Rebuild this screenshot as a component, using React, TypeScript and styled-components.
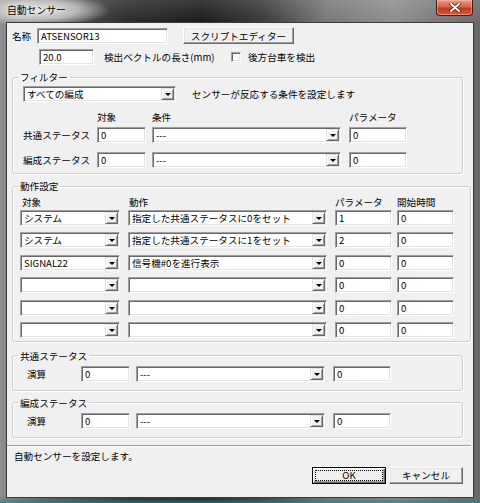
import styled, { createGlobalStyle } from "styled-components";

const GlobalStyle = createGlobalStyle`
  html, body {
    margin: 0;
    padding: 0;
    background: #000;
  }
  body {
    width: 480px;
    height: 503px;
    overflow: hidden;
    font-family: "Noto Sans CJK JP", "Noto Sans", sans-serif;
    font-size: 9.6px;
    color: #000;
  }
`;

type ActionRow = {
  target: string;
  action: string;
  param: string;
  start: string;
};

const actions: ActionRow[] = [
  { target: "システム", action: "指定した共通ステータスに0をセット", param: "1", start: "0" },
  { target: "システム", action: "指定した共通ステータスに1をセット", param: "2", start: "0" },
  { target: "SIGNAL22", action: "信号機#0を進行表示", param: "0", start: "0" },
  { target: "", action: "", param: "0", start: "0" },
  { target: "", action: "", param: "0", start: "0" },
  { target: "", action: "", param: "0", start: "0" },
];

const Combo = ({ w, value }: { w: number; value?: string }) => (
  <ComboField $w={w}>
    <ComboText>{value}</ComboText>
    <ComboArrow />
  </ComboField>
);

const CloseIcon = () => (
  <svg width="12" height="9" viewBox="0 0 12 9">
    <path d="M2 1 L10 8 M10 1 L2 8" stroke="#5a1408" strokeWidth="3.4" strokeLinecap="round" />
    <path d="M2 1 L10 8 M10 1 L2 8" stroke="#ffffff" strokeWidth="2" strokeLinecap="round" />
  </svg>
);

export default function App() {
  return (
    <>
      <GlobalStyle />
      <Window>
        <TitleBar>
          <TitleText>自動センサー</TitleText>
          <CloseButton>
            <CloseIcon />
          </CloseButton>
        </TitleBar>
        <Client>
          <TopRow>
            <Label $w={25}>名称</Label>
            <TextBox $w={131}>ATSENSOR13</TextBox>
            <PushButton $w={111} $ml={15}>
              スクリプトエディター
            </PushButton>
          </TopRow>
          <OptionRow>
            <TextBox $w={55}>20.0</TextBox>
            <Label $w={127} $ml={10}>
              検出ベクトルの長さ(mm)
            </Label>
            <CheckBox />
            <Label $ml={7}>後方台車を検出</Label>
          </OptionRow>

          <Group $w={451} $mt={6} $pt={3} $pb={5}>
            <Caption>フィルター</Caption>
            <GroupBody $pl={5}>
              <FilterLine>
                <Combo w={153} value="すべての編成" />
                <Label $ml={16}>センサーが反応する条件を設定します</Label>
              </FilterLine>
              <FieldGrid $cols="74px 55px 197px 58px" $rows="16px 25px 16px" $mt={9}>
                <span />
                <Head>対象</Head>
                <Head>条件</Head>
                <Head>パラメータ</Head>
                <Label>共通ステータス</Label>
                <TextBox $w={49}>0</TextBox>
                <Combo w={189} value="---" />
                <TextBox $w={58}>0</TextBox>
                <Label>編成ステータス</Label>
                <TextBox $w={49}>0</TextBox>
                <Combo w={189} value="---" />
                <TextBox $w={58}>0</TextBox>
              </FieldGrid>
            </GroupBody>
          </Group>

          <Group $w={459} $mt={6} $pt={4} $pb={3}>
            <Caption>動作設定</Caption>
            <GroupBody $pl={2}>
              <FieldGrid
                $cols="108px 207px 62px 62px"
                $rows="14px repeat(5, 22.4px) 16px"
              >
                <Head $pl={2}>対象</Head>
                <Head $pl={1}>動作</Head>
                <Head>パラメータ</Head>
                <Head>開始時間</Head>
                {actions.map((row, i) => (
                  <RowCells key={i}>
                    <Combo w={100} value={row.target} />
                    <Combo w={199} value={row.action} />
                    <TextBox $w={57}>{row.param}</TextBox>
                    <TextBox $w={57}>{row.start}</TextBox>
                  </RowCells>
                ))}
              </FieldGrid>
            </GroupBody>
          </Group>

          <Group $w={451} $mt={8} $pt={4} $pb={8}>
            <Caption>共通ステータス</Caption>
            <GroupBody $pl={9}>
              <FieldGrid $cols="54px 55px 197px 58px" $rows="16px">
                <Label>演算</Label>
                <TextBox $w={49}>0</TextBox>
                <Combo w={189} value="---" />
                <TextBox $w={58}>0</TextBox>
              </FieldGrid>
            </GroupBody>
          </Group>

          <Group $w={451} $mt={6} $pt={4} $pb={8}>
            <Caption>編成ステータス</Caption>
            <GroupBody $pl={9}>
              <FieldGrid $cols="54px 55px 197px 58px" $rows="16px">
                <Label>演算</Label>
                <TextBox $w={49}>0</TextBox>
                <Combo w={189} value="---" />
                <TextBox $w={58}>0</TextBox>
              </FieldGrid>
            </GroupBody>
          </Group>

          <Separator />
          <StatusText>自動センサーを設定します。</StatusText>
          <ButtonBar>
            <DefaultButton $w={74}>OK</DefaultButton>
            <PushButton $w={74}>キャンセル</PushButton>
          </ButtonBar>
        </Client>
      </Window>
    </>
  );
}

const Window = styled.div`
  box-sizing: border-box;
  width: 480px;
  height: 503px;
  display: flex;
  flex-direction: column;
  padding: 0 7px 6px;
  background:
    radial-gradient(ellipse 72px 17px at 38px 10px, rgba(236, 236, 236, 0.95) 0%, rgba(205, 205, 205, 0.8) 55%, rgba(190, 190, 190, 0) 100%),
    linear-gradient(180deg, rgba(255, 255, 255, 0.14) 0px, rgba(255, 255, 255, 0) 24px, rgba(0, 0, 0, 0) 496px, rgba(40, 130, 140, 0.7) 503px),
    linear-gradient(90deg, #8e8e8e 0%, #5e5e5e 10%, #2a2a2a 26%, #1a1a1a 42%, #353535 54%, #767676 68%, #8c8c8c 82%, #686868 100%);
`;

const TitleBar = styled.div`
  height: 23px;
  display: flex;
  justify-content: space-between;
  align-items: flex-start;
`;

const TitleText = styled.span`
  padding-top: 4px;
  font-size: 9.8px;
  line-height: 13px;
  color: #000;
  text-shadow: 0 0 4px #fff, 0 0 8px #eee;
`;

const CloseButton = styled.div`
  box-sizing: border-box;
  width: 37px;
  height: 16px;
  display: flex;
  align-items: center;
  justify-content: center;
  border: 1px solid #4a1a12;
  border-top: none;
  border-radius: 0 0 4px 4px;
  background: linear-gradient(180deg, #e89a88 0%, #d6634c 45%, #c23a1e 55%, #d8573a 100%);
  box-shadow: inset 0 0 0 1px rgba(255, 200, 180, 0.5);
`;

const Client = styled.div`
  flex: 1;
  display: flex;
  flex-direction: column;
  background: #f0f0f0;
  box-shadow: 0 0 0 1px #3a3a3a;
`;

const TopRow = styled.div`
  display: flex;
  align-items: center;
  height: 17px;
  margin-top: 4px;
  padding-left: 5px;
`;

const OptionRow = styled.div`
  display: flex;
  align-items: center;
  height: 16px;
  margin-top: 5px;
  padding-left: 32px;
`;

const Label = styled.span<{ $w?: number; $ml?: number }>`
  ${(p) => (p.$w ? `width: ${p.$w}px;` : "")}
  margin-left: ${(p) => p.$ml ?? 0}px;
  flex-shrink: 0;
  white-space: nowrap;
  line-height: 16px;
`;

const Head = styled.span<{ $pl?: number }>`
  padding-left: ${(p) => p.$pl ?? 0}px;
  line-height: 12px;
  white-space: nowrap;
`;

const sunken = `
  border: 1px solid;
  border-color: #a0a0a0 #ffffff #ffffff #a0a0a0;
  box-shadow: inset 1px 1px 0 #696969, inset -1px -1px 0 #e3e3e3;
`;

const TextBox = styled.div<{ $w: number }>`
  box-sizing: border-box;
  width: ${(p) => p.$w}px;
  height: 16px;
  padding: 0 2px 0 3px;
  background: #fff;
  ${sunken}
  line-height: 14px;
  white-space: nowrap;
  overflow: hidden;
  flex-shrink: 0;
`;

const ComboField = styled.div<{ $w: number }>`
  box-sizing: border-box;
  width: ${(p) => p.$w}px;
  height: 16px;
  padding: 1px;
  display: flex;
  background: #fff;
  ${sunken}
  flex-shrink: 0;
`;

const ComboText = styled.span`
  flex: 1;
  padding-left: 2px;
  line-height: 12px;
  white-space: nowrap;
  overflow: hidden;
`;

const ComboArrow = styled.span`
  box-sizing: border-box;
  width: 13px;
  display: flex;
  align-items: center;
  justify-content: center;
  background: #f0f0f0;
  border: 1px solid;
  border-color: #e3e3e3 #696969 #696969 #e3e3e3;
  box-shadow: inset 1px 1px 0 #fff, inset -1px -1px 0 #a0a0a0;

  &::after {
    content: "";
    margin-top: 1px;
    border-style: solid;
    border-width: 3px 3px 0;
    border-color: #000 transparent transparent;
  }
`;

const PushButton = styled.div<{ $w: number; $ml?: number }>`
  box-sizing: border-box;
  width: ${(p) => p.$w}px;
  height: 17px;
  margin-left: ${(p) => p.$ml ?? 0}px;
  display: flex;
  align-items: center;
  justify-content: center;
  background: #f0f0f0;
  border: 1px solid;
  border-color: #ffffff #696969 #696969 #ffffff;
  box-shadow: inset -1px -1px 0 #a0a0a0, inset 1px 1px 0 #e3e3e3;
  white-space: nowrap;
  flex-shrink: 0;
`;

const DefaultButton = styled(PushButton)`
  border-color: #000;
  box-shadow: inset 1px 1px 0 #fff, inset -1px -1px 0 #696969, inset -2px -2px 0 #a0a0a0;
  outline: 1px dotted #000;
  outline-offset: -4px;
`;

const CheckBox = styled.span`
  box-sizing: border-box;
  width: 10px;
  height: 10px;
  background: #fff;
  ${sunken}
  flex-shrink: 0;
`;

const Group = styled.fieldset<{ $w: number; $mt: number; $pt: number; $pb: number }>`
  box-sizing: border-box;
  width: ${(p) => p.$w}px;
  min-width: 0;
  margin: ${(p) => p.$mt}px 0 0 5px;
  padding: ${(p) => p.$pt}px 0 ${(p) => p.$pb}px 5px;
  border: 1px solid #cdcdcd;
  border-radius: 3px;
  box-shadow: inset 1px 1px 0 #fff, 1px 1px 0 #fff;
`;

const Caption = styled.legend`
  padding: 0 2px;
  font-size: 9.6px;
  line-height: 12px;
`;

const GroupBody = styled.div<{ $pl: number }>`
  padding-left: ${(p) => p.$pl}px;
`;

const FilterLine = styled.div`
  display: flex;
  align-items: center;
  height: 16px;
`;

const FieldGrid = styled.div<{ $cols: string; $rows: string; $mt?: number }>`
  display: grid;
  grid-template-columns: ${(p) => p.$cols};
  grid-template-rows: ${(p) => p.$rows};
  align-items: start;
  margin-top: ${(p) => p.$mt ?? 0}px;
`;

const RowCells = styled.div`
  display: contents;
`;

const Separator = styled.div`
  margin-top: 7px;
  width: 464px;
  height: 1px;
  background: #a0a0a0;
  border-bottom: 1px solid #fff;
`;

const StatusText = styled.div`
  margin-top: 3px;
  padding-left: 7px;
  line-height: 12px;
`;

const ButtonBar = styled.div`
  display: flex;
  justify-content: flex-end;
  gap: 3px;
  margin-top: 5px;
  padding-right: 10px;
`;
